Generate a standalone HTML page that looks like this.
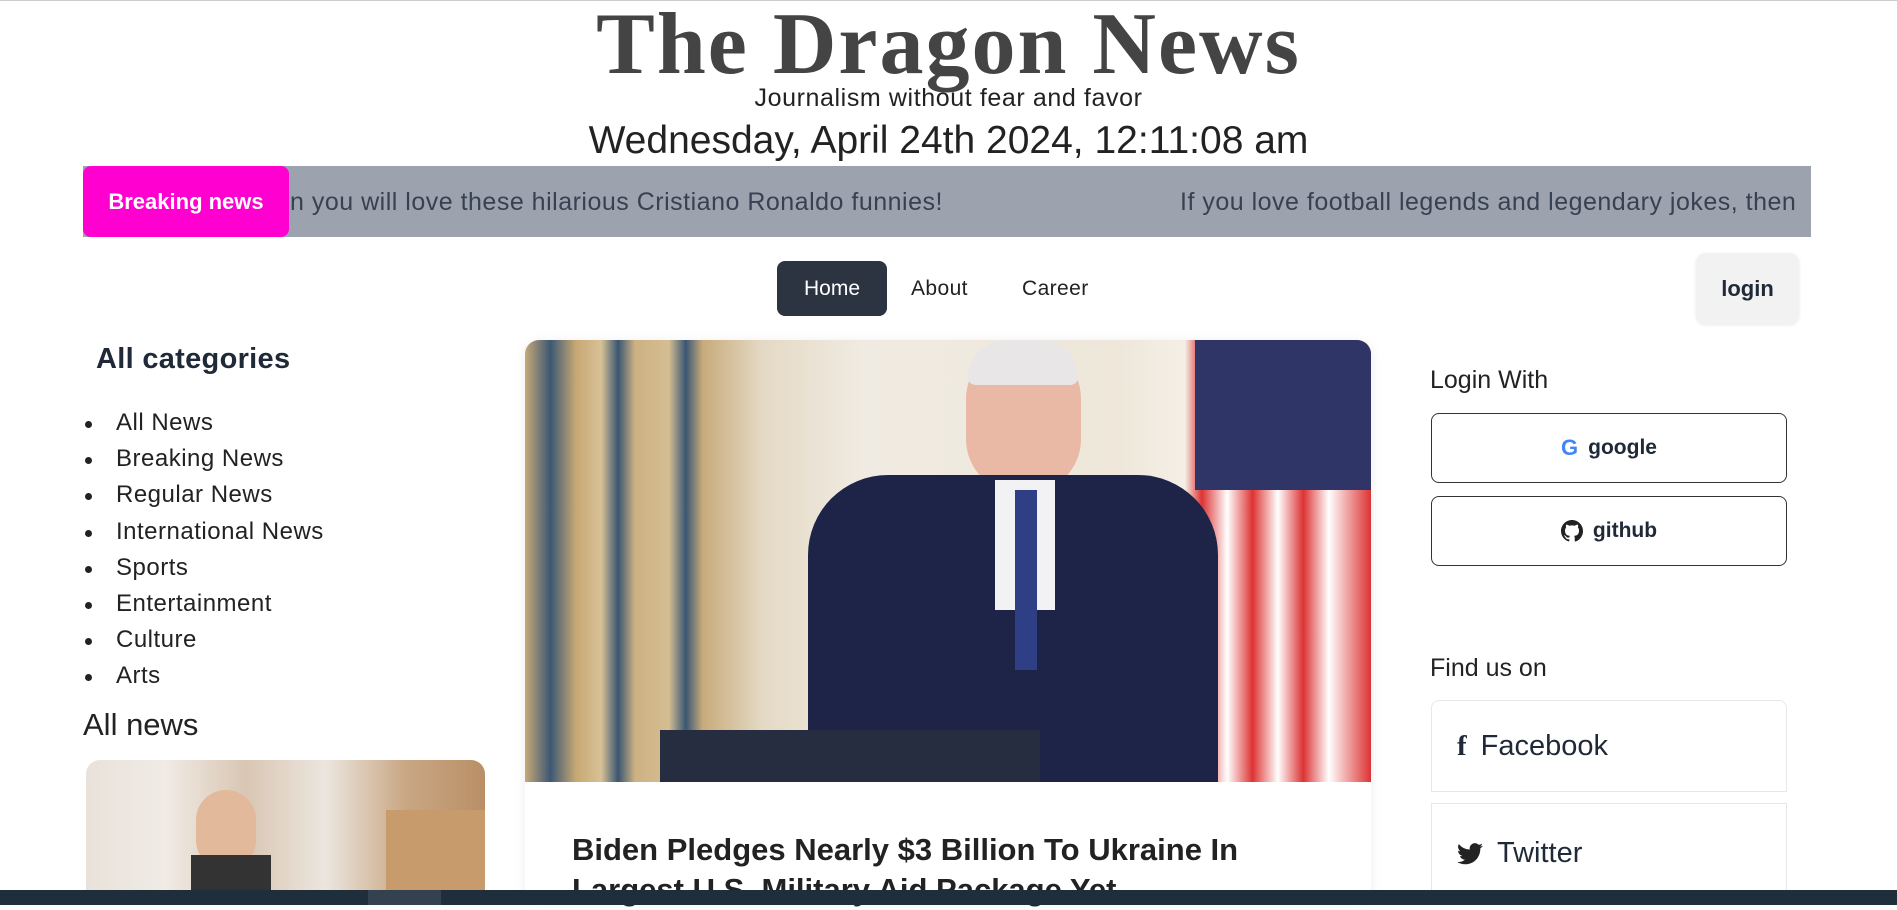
<!DOCTYPE html>
<html><head><meta charset="utf-8"><style>
*{margin:0;padding:0;box-sizing:border-box}
body{width:1897px;height:905px;overflow:hidden;background:#fff;font-family:"Liberation Sans",sans-serif;color:#1f2937;position:relative}
.a{position:absolute}
.title{left:0;width:1897px;top:-6px;text-align:center;font-family:"Liberation Serif",serif;font-weight:bold;font-size:88px;color:#444;letter-spacing:2px}
.tag{left:0;width:1897px;top:84px;text-align:center;font-size:25px;letter-spacing:0.6px;color:#222}
.date{left:0;width:1897px;top:119px;text-align:center;font-size:39px;color:#222}
.bar{left:83px;top:166px;width:1728px;height:71px;background:#9ca3af;overflow:hidden}
.bn{left:83px;top:166px;width:206px;height:71px;background:#ff00d0;border-radius:8px;color:#fff;font-weight:bold;font-size:22px;text-align:center;line-height:71px}
.tick{top:188px;font-size:25px;letter-spacing:0.5px;color:#374151;white-space:nowrap}
.home{left:777px;top:261px;width:110px;height:55px;background:#2b3440;border-radius:8px;color:#fff;font-size:21px;text-align:center;line-height:55px}
.nav{top:277px;font-size:21px;color:#222;letter-spacing:0.4px}
.login{left:1696px;top:253px;width:103px;height:71px;background:#f2f2f2;border-radius:10px;font-weight:bold;font-size:22px;text-align:center;line-height:71px;box-shadow:0 1px 3px rgba(0,0,0,.1)}
.cat{left:96px;top:343px;font-size:29px;font-weight:bold;letter-spacing:0.3px}
ul{position:absolute;left:116px;top:405px;list-style:none;font-size:24px;letter-spacing:0.5px;line-height:36.2px;color:#222}
ul li{position:relative}
ul li:before{content:"";position:absolute;left:-31px;top:16px;width:7px;height:7px;border-radius:50%;background:#222}
.an{left:83px;top:707px;font-size:31px;color:#222}
.btn{left:1431px;width:356px;height:70px;border:1px solid #333;border-radius:8px;font-weight:bold;font-size:21px;display:flex;align-items:center;justify-content:center;gap:10px}
.soc{left:1431px;width:356px;border:1px solid #e5e7eb;font-size:29px;display:flex;align-items:center;padding-left:25px;gap:14px}
</style></head><body>
<div class="a" style="left:0;top:0;width:1897px;height:1px;background:#ccc"></div>
<div class="a title">The Dragon News</div>
<div class="a tag">Journalism without fear and favor</div>
<div class="a date">Wednesday, April 24th 2024, 12:11:08 am</div>
<div class="a bar"></div>
<div class="a tick" style="left:290px">n you will love these hilarious Cristiano Ronaldo funnies!</div>
<div class="a tick" style="left:1180px;width:631px;overflow:hidden">If you love football legends and legendary jokes, then</div>
<div class="a bn">Breaking news</div>
<div class="a home">Home</div>
<div class="a nav" style="left:911px">About</div>
<div class="a nav" style="left:1022px">Career</div>
<div class="a login">login</div>
<div class="a cat">All categories</div>
<ul><li>All News</li><li>Breaking News</li><li>Regular News</li><li>International News</li><li>Sports</li><li>Entertainment</li><li>Culture</li><li>Arts</li></ul>
<div class="a an">All news</div>
<div class="a" style="left:86px;top:760px;width:399px;height:140px;border-radius:14px 14px 0 0;overflow:hidden;background:linear-gradient(90deg,#e8e2da 0%,#f0ebe5 20%,#d9c6b3 40%,#ece6df 60%,#c9a784 80%,#b98f66 100%)">
<div class="a" style="left:110px;top:30px;width:60px;height:80px;border-radius:30px;background:#e2b99a"></div>
<div class="a" style="left:105px;top:95px;width:80px;height:50px;background:#333"></div>
<div class="a" style="left:300px;top:50px;width:99px;height:90px;background:#c79b6c"></div></div>
<div class="a" style="left:525px;top:340px;width:846px;height:560px;box-shadow:0 2px 12px rgba(0,0,0,.08);border-radius:14px"></div>
<div class="a" style="left:525px;top:340px;width:846px;height:442px;border-radius:14px 14px 0 0;overflow:hidden;background:linear-gradient(90deg,#c7a978 0%,#3d5874 3%,#c6a873 6%,#d8c196 9%,#3a5672 11%,#cdb182 13%,#d4be92 17%,#3b5774 19%,#c7ab7b 21%,#e4d9c4 28%,#f0ebe2 40%,#eee7da 70%,#f4efe6 78%,#d33 80%,#fff 83%,#d33 86%,#fff 89%,#d33 92%,#fff 95%,#d33 100%)">
<div class="a" style="left:670px;top:0;width:176px;height:150px;background:#2f3566"></div>
<div class="a" style="left:441px;top:4px;width:115px;height:150px;border-radius:55px;background:#e9b9a5"></div>
<div class="a" style="left:443px;top:0px;width:110px;height:45px;border-radius:50px 50px 10px 10px;background:#e8e6e6"></div>
<div class="a" style="left:283px;top:135px;width:410px;height:320px;border-radius:80px 80px 0 0;background:#1e2447"></div>
<div class="a" style="left:470px;top:140px;width:60px;height:130px;background:#f2f2f4"></div>
<div class="a" style="left:490px;top:150px;width:22px;height:180px;background:#2e3f86"></div>
<div class="a" style="left:135px;top:390px;width:380px;height:60px;background:#262d40"></div></div>
<div class="a" style="left:572px;top:830px;font-size:31px;font-weight:bold;line-height:40px;color:#222">Biden Pledges Nearly $3 Billion To Ukraine In<br>Largest U.S. Military Aid Package Yet</div>
<div class="a" style="left:1430px;top:366px;font-size:25px;color:#222">Login With</div>
<div class="a btn" style="top:413px"><span style="font-size:22px;color:#4285f4">G</span>google</div>
<div class="a btn" style="top:496px"><svg width="22" height="22" viewBox="0 0 16 16"><path fill="#222" d="M8 0C3.58 0 0 3.58 0 8c0 3.54 2.29 6.530 5.47 7.59.4.07.55-.17.55-.38v-1.33c-2.23.48-2.7-1.07-2.7-1.07-.36-.92-.89-1.170-.89-1.17-.73-.5.05-.49.05-.49.81.06 1.23.83 1.23.83.72 1.23 1.88.87 2.34.67.07-.52.28-.87.51-1.07-1.78-.2-3.65-.89-3.65-3.95 0-.87.31-1.59.82-2.150-.08-.2-.36-1.02.08-2.12 0 0 .67-.21 2.2.82a7.6 7.6 0 0 1 4 0c1.53-1.04 2.2-.82 2.2-.82.44 1.1.16 1.92.08 2.12.51.56.82 1.27.82 2.15 0 3.07-1.87 3.75-3.65 3.95.29.25.54.73.54 1.48v2.2c0 .21.15.46.55.38A8.01 8.01 0 0 0 16 8c0-4.42-3.58-8-8-8z"/></svg>github</div>
<div class="a" style="left:1430px;top:654px;font-size:25px;color:#222">Find us on</div>
<div class="a soc" style="top:700px;height:92px;border-radius:8px 8px 0 0"><span style="font-weight:bold;font-family:'Liberation Serif',serif">f</span>Facebook</div>
<div class="a soc" style="top:803px;height:100px;border-bottom:none"><svg width="26" height="22" viewBox="0 0 24 20"><path fill="#222" d="M24 2.4a9.8 9.8 0 0 1-2.8.8A4.9 4.9 0 0 0 23.3.4a9.9 9.9 0 0 1-3.1 1.2A4.9 4.9 0 0 0 11.8 6 14 14 0 0 1 1.7.9a4.9 4.9 0 0 0 1.5 6.6A4.9 4.9 0 0 1 1 6.9a4.9 4.9 0 0 0 3.9 4.9 4.9 4.9 0 0 1-2.2.1 4.9 4.9 0 0 0 4.6 3.4A9.9 9.9 0 0 1 0 17.3 14 14 0 0 0 7.5 19.5c9.1 0 14-7.5 14-14v-.6A10 10 0 0 0 24 2.4z"/></svg>Twitter</div>
<div class="a" style="left:0;top:890px;width:1897px;height:15px;background:#1f2e3b"></div>
<div class="a" style="left:368px;top:890px;width:73px;height:15px;background:#34424f"></div>
</body></html>
